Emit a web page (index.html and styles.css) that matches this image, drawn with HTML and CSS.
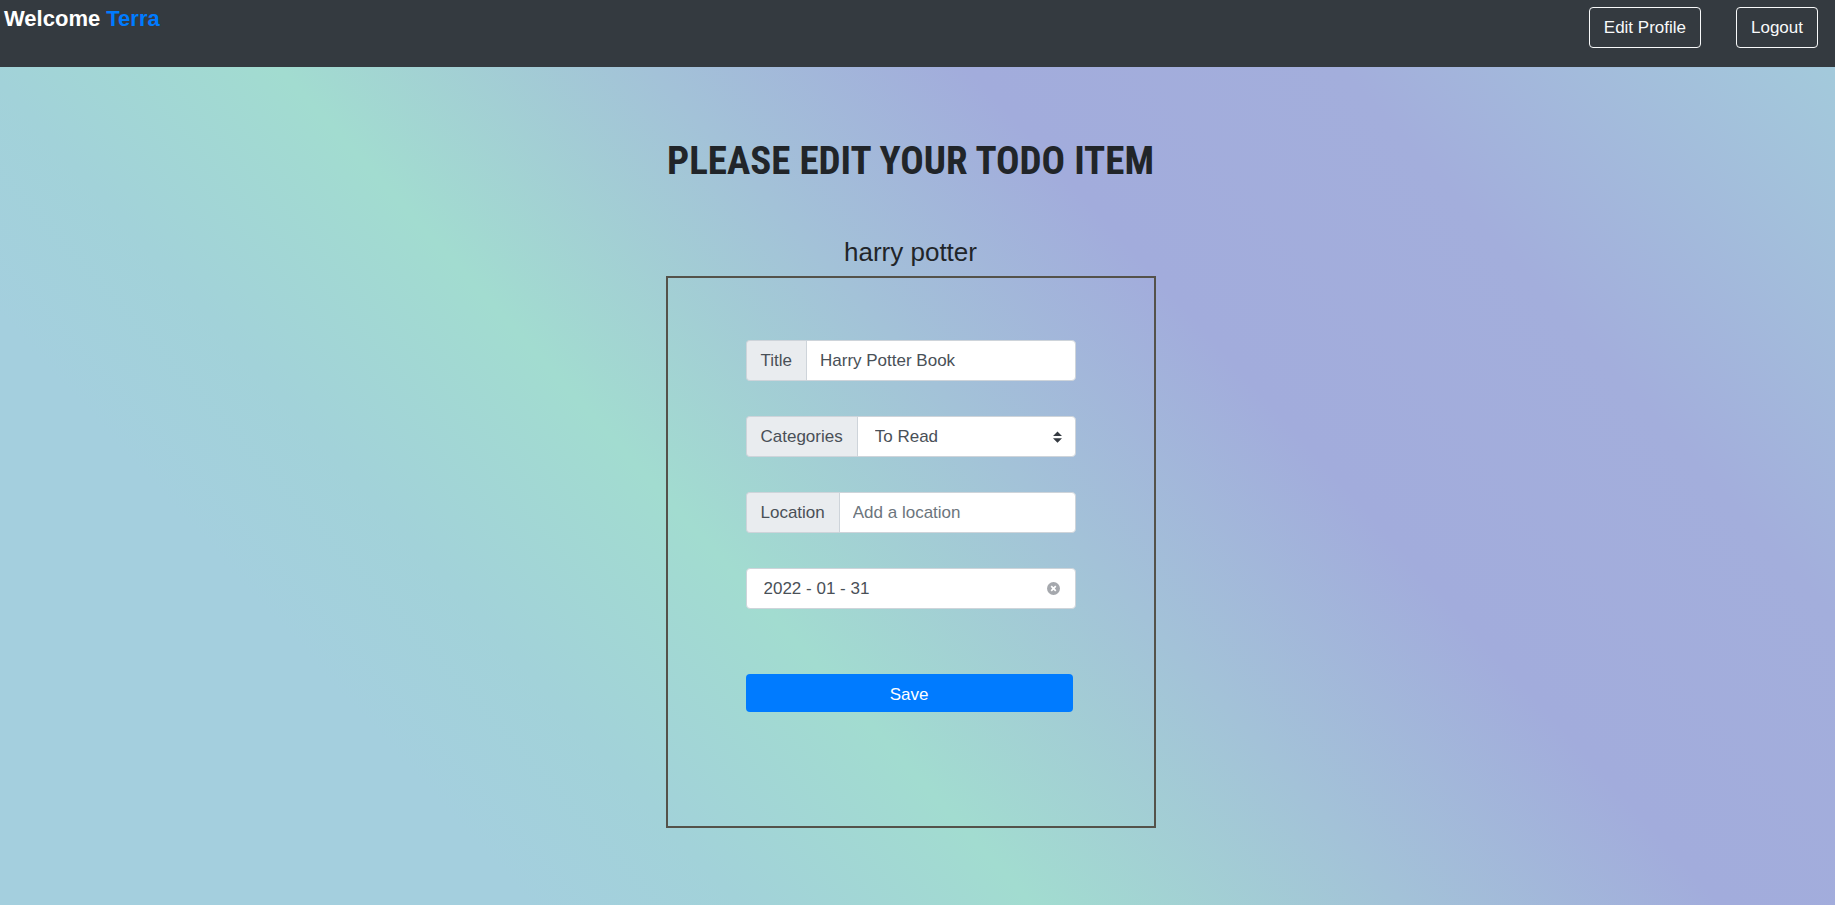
FILE: index.html
```html
<!DOCTYPE html>
<html lang="en">
<head>
<meta charset="utf-8">
<title>Edit todo item</title>
<link rel="stylesheet" href="styles.css">
</head>
<body>
<header class="navbar">
  <h4 class="welcome">Welcome <span class="welcome-name">Terra</span></h4>
  <nav class="nav-actions">
    <a class="btn btn-outline" href="#profile">Edit Profile</a>
    <a class="btn btn-outline" href="#logout">Logout</a>
  </nav>
</header>
<main class="page">
  <h1 class="page-title">PLEASE EDIT YOUR TODO ITEM</h1>
  <h3 class="item-name">harry potter</h3>
  <form class="card">
    <div class="input-group">
      <label class="input-label" for="title">Title</label>
      <input class="form-control" id="title" type="text" value="Harry Potter Book">
    </div>
    <div class="input-group">
      <label class="input-label" for="category">Categories</label>
      <select class="form-control select" id="category">
        <option>To Read</option>
        <option>To Watch</option>
        <option>To Eat</option>
        <option>To Buy</option>
      </select>
      <svg class="select-icon" viewBox="0 0 4 5" aria-hidden="true"><path fill="#343a40" d="M2 0 0 2h4zm0 5L0 3h4z"/></svg>
    </div>
    <div class="input-group">
      <label class="input-label" for="location">Location</label>
      <input class="form-control" id="location" type="text" placeholder="Add a location">
    </div>
    <div class="input-group date-group">
      <input class="form-control date" type="text" value="2022 - 01 - 31" aria-label="Date">
      <button class="clear" type="button" aria-label="Clear date">
        <svg viewBox="0 0 13 13" width="13" height="13"><circle cx="6.5" cy="6.5" r="6.5" fill="#a5a8ad"/><path d="M4.2 4.2l4.6 4.6M8.8 4.2l-4.6 4.6" stroke="#fff" stroke-width="1.7"/></svg>
      </button>
    </div>
    <button class="btn btn-save" type="submit">Save</button>
  </form>
</main>
</body>
</html>
```
FILE: styles.css
```css
*, *::before, *::after {
  box-sizing: border-box;
}

body {
  margin: 0;
  min-height: 100vh;
  color: #212529;
  font-family: "Liberation Sans", Arial, sans-serif;
  font-size: 17px;
  line-height: 27px;
  background: linear-gradient(48deg, #a4cfde 20%, #a2d2d9 28%, #a2dcd0 39%, #a3c2d8 53%, #a2acdc 65%, #a3aedc 79%, #a3cadb 98%) no-repeat fixed;
}

.navbar {
  display: flex;
  align-items: flex-start;
  justify-content: space-between;
  height: 67px;
  padding: 7px 17px 0 4px;
  background: #343a40;
}

.welcome {
  margin: 0;
  color: #fff;
  font-size: 22px;
  font-weight: 700;
  line-height: 24px;
}

.welcome-name {
  color: #007bff;
}

.nav-actions {
  display: flex;
  gap: 35px;
}

.btn {
  padding: 6px 14px;
  border: 1px solid transparent;
  border-radius: 4px;
  color: #fff;
  font: inherit;
  text-align: center;
  text-decoration: none;
}

.btn-outline {
  border-color: #f8f9fa;
  color: #f8f9fa;
}

.page {
  display: flex;
  flex-direction: column;
  align-items: center;
  padding: 70px 14px 24px 0;
}

.page-title {
  margin: 0;
  font-family: "Roboto Condensed", Roboto, sans-serif;
  font-size: 39px;
  font-stretch: condensed;
  font-weight: 700;
  line-height: 48px;
}

.item-name {
  margin: 52px 0 9px;
  font-size: 26px;
  font-weight: 400;
  line-height: 30px;
}

.card {
  display: flex;
  flex-direction: column;
  gap: 35px;
  width: 490px;
  max-width: 100%;
  min-height: 552px;
  padding: 62px 78px;
  border: 2px solid #54524a;
}

.input-group {
  position: relative;
  display: flex;
  height: 41px;
}

.input-label {
  padding: 6px 14px;
  border: 1px solid #ced4da;
  border-right: 0;
  border-radius: 4px 0 0 4px;
  color: #495057;
  background: #e9ecef;
}

.form-control {
  flex: 1;
  min-width: 0;
  padding: 6px 13px;
  border: 1px solid #ced4da;
  border-radius: 0 4px 4px 0;
  color: #495057;
  background: #fff;
  font: inherit;
}

.form-control::placeholder {
  color: #6c757d;
  opacity: 1;
}

.select {
  padding: 6px 17px;
  appearance: none;
}

.select-icon {
  position: absolute;
  top: 15px;
  right: 14px;
  width: 9px;
  height: 12px;
  pointer-events: none;
}

.date {
  padding: 6px 17px;
  border-radius: 4px;
}

.clear {
  position: absolute;
  top: 14px;
  right: 16px;
  display: flex;
  padding: 0;
  border: 0;
  background: none;
}

.btn-save {
  height: 38px;
  margin: 30px 3px 0 0;
  padding: 6px 14px 4px;
  background: #007bff;
}
```
